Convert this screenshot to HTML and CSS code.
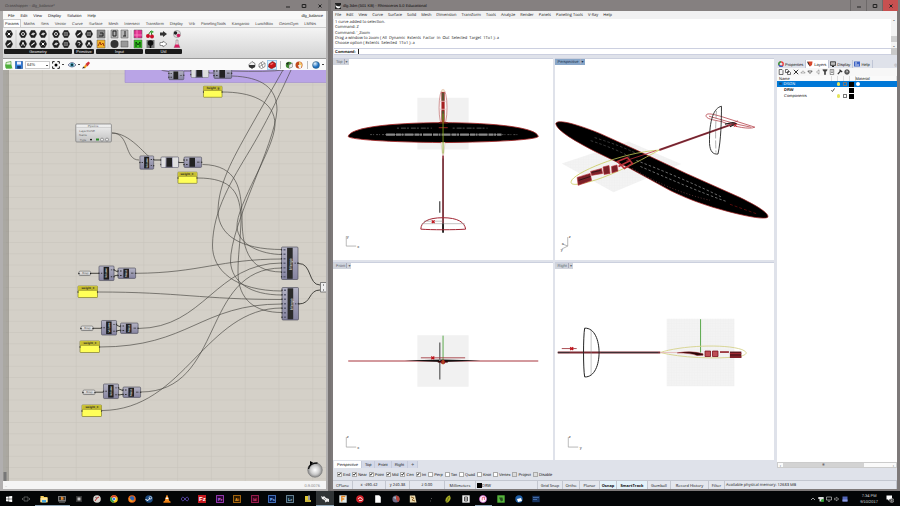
FILE: index.html
```html
<!DOCTYPE html>
<html lang="en">
<head>
<meta charset="utf-8">
<meta name="viewport" content="width=device-width, initial-scale=1">
<title>dlg.3dm - Rhinoceros 5.0 Educational</title>
<link rel="stylesheet" href="styles.css">
</head>
<body>
<svg class="defs" aria-hidden="true">
  <defs>
    <linearGradient id="metal" x1="0" y1="0" x2="0" y2="1"><stop offset="0" stop-color="#b4b3c4"/><stop offset="1" stop-color="#8583a0"/></linearGradient>
    <linearGradient id="pale" x1="0" y1="0" x2="0" y2="1"><stop offset="0" stop-color="#f2f2f2"/><stop offset="1" stop-color="#c2c2c2"/></linearGradient>
    <radialGradient id="dial"><stop offset="0" stop-color="#fff"/><stop offset=".6" stop-color="#ccc"/><stop offset="1" stop-color="#888"/></radialGradient>
    <radialGradient id="ballblue" cx=".35" cy=".3"><stop offset="0" stop-color="#e8f6ff"/><stop offset="1" stop-color="#1d6fc0"/></radialGradient>
    <pattern id="mesh" width="33.8" height="11.25" patternUnits="userSpaceOnUse" patternTransform="translate(75.7 118.3)"><path d="M0 0H33.8M0 0V11.25" fill="none" stroke="#c2beb5" stroke-width="1"/></pattern>
    <pattern id="fine" width="2.6" height="2.6" patternUnits="userSpaceOnUse"><rect width="2.6" height="2.6" fill="#f3f3f3"/><path d="M0 0H2.6M0 0V2.6" stroke="#ebebeb" stroke-width=".5"/></pattern>
    <symbol id="hex" viewBox="0 0 8 8"><path d="M2.2.3h3.6L7.8 4 5.8 7.7H2.2L.2 4z" fill="#1c1c1c" stroke="#555" stroke-width=".4"/></symbol>
    <symbol id="h1" viewBox="0 0 8 8"><use href="#hex"/><path d="M2.6 2.6l2.8 2.8M5.4 2.6L2.6 5.4" stroke="#fff"/></symbol>
    <symbol id="h2" viewBox="0 0 8 8"><use href="#hex"/><path d="M2.3 5.4L5.6 2.6" stroke="#fff" stroke-width="1.2"/></symbol>
    <symbol id="h3" viewBox="0 0 8 8"><use href="#hex"/><circle cx="4" cy="4" r="1.5" fill="none" stroke="#ddd"/></symbol>
    <symbol id="h4" viewBox="0 0 8 8"><use href="#hex"/><path d="M1.8 4.6l2.2-2 2.4.6-2 2.2z" fill="#ccc"/></symbol>
    <symbol id="h5" viewBox="0 0 8 8"><use href="#hex"/><path d="M2.2 2.4h3.4v3.2H2.2zM4 2.4v3.2M2.2 4h3.4" fill="none" stroke="#aaa" stroke-width=".6"/></symbol>
    <symbol id="h6" viewBox="0 0 8 8"><use href="#hex"/><path d="M2.6 5.8L4 2.2l1.4 3.6" fill="none" stroke="#fff" stroke-width=".9"/></symbol>
    <symbol id="h7" viewBox="0 0 8 8"><use href="#hex"/><path d="M2.6 3c.5-1 2.7-.8 2.5.4S4 4 4 5.4" fill="none" stroke="#fff" stroke-width=".9"/></symbol>
    <symbol id="axes" viewBox="0 0 13 12"><path d="M1 1v10h10" fill="none" stroke="#999" stroke-width=".7"/></symbol>
    <symbol id="panel" viewBox="-1 -1 22 14"><rect width="19.5" height="11.5" rx=".6" fill="#ffff58" stroke="#6c681f" stroke-width=".6"/><path d="M.3.3h18.9v4H.3z" fill="#c6bd31"/><path d="M0 4.4h19.5" stroke="#777223" stroke-width=".5"/><circle cx="0" cy="6" r=".7" fill="#333"/><circle cx="19.5" cy="6" r=".7" fill="#333"/></symbol>
    <symbol id="node" viewBox="-1 -1 18 18"><rect width="15.5" height="15" rx="1" fill="url(#metal)" stroke="#454552" stroke-width=".6"/><rect x="4.8" y="1" width="5.6" height="13" fill="#1d1d1d"/><g fill="#333"><circle cx="0" cy="7.5" r=".8"/><circle cx="15.5" cy="4" r=".8"/><circle cx="15.5" cy="11" r=".8"/><path d="M2 7h1.4v1H2zM12.2 3.5h1.4v1h-1.4zM12.2 10.5h1.4v1h-1.4z"/></g></symbol>
    <symbol id="small" viewBox="-1 -1 20 13"><rect width="17.6" height="10.4" rx="1" fill="url(#metal)" stroke="#454552" stroke-width=".6"/><rect x="5.4" y=".8" width="5.6" height="9" fill="#222"/><g fill="#333"><circle cx="0" cy="3" r=".8"/><circle cx="0" cy="7.6" r=".8"/><circle cx="17.6" cy="5.2" r=".8"/><path d="M2 2.5h1.6v1H2zM2 7.1h1.6v1H2zM13 4.8h2.5v.8H13z"/></g></symbol>
    <symbol id="merge" viewBox="-1 -1 19 35"><rect width="16.5" height="32.5" rx="1" fill="url(#metal)" stroke="#454552" stroke-width=".6"/><rect x="5.6" y=".8" width="5.6" height="31" fill="#2a2a2a"/><path d="M2 2.7h2M2 7.2h2M2 11.7h2M2 16.2h2M2 20.7h2M2 25.2h2M2 29.7h2M13 16.2h1.4" stroke="#5b5d75" stroke-width="1.4"/><path d="M0 2v30" stroke="#333" stroke-width="1.2" stroke-dasharray="1.4 3.1"/><circle cx="16.5" cy="16.2" r=".9" fill="#333"/></symbol>
    <symbol id="pill" viewBox="-1 -1 15 7"><rect width="12.5" height="4.6" rx="1.3" fill="url(#pale)" stroke="#555" stroke-width=".6"/><circle cx="0" cy="2.3" r=".7"/><circle cx="12.5" cy="2.3" r=".7"/></symbol>
  </defs>
</svg>

<div class="desktop">
  <main class="windows">
    <section class="window gh">
      <header class="titlebar">
        <h1>Grasshopper - dlg_balance*</h1>
        <div class="winbtns">
          <button aria-label="Minimize"><svg viewBox="0 0 6 6"><path d="M1 4h4"/></svg></button>
          <button aria-label="Maximize"><svg viewBox="0 0 6 6"><path d="M1.2 1.5h3.6v3H1.2z"/></svg></button>
          <button aria-label="Close"><svg viewBox="0 0 6 6"><path d="M1.5 1.5l3 3M4.500 1.500l-3 3"/></svg></button>
        </div>
      </header>
      <nav class="menu ghmenu"><a href="#">File</a><a href="#">Edit</a><a href="#">View</a><a href="#">Display</a><a href="#">Solution</a><a href="#">Help</a><span class="docname">dlg_balance</span></nav>
      <nav class="ribbontabs"><a href="#" class="on">Params</a><a href="#">Maths</a><a href="#">Sets</a><a href="#">Vector</a><a href="#">Curve</a><a href="#">Surface</a><a href="#">Mesh</a><a href="#">Intersect</a><a href="#">Transform</a><a href="#">Display</a><a href="#">Vrb</a><a href="#">PanelingTools</a><a href="#">Kangaroo</a><a href="#">LunchBox</a><a href="#">GeomGym</a><a href="#">LMNts</a></nav>
      <div class="ribbon">
        <div class="group">
          <svg width="68" height="20" viewBox="4 29 68 20">
            <g><use href="#h1" x="5" y="30" width="8" height="8"/><use href="#h2" x="5" y="40" width="8" height="8"/>
            <use href="#h3" x="19" y="30" width="8" height="8"/><use href="#h4" x="29" y="30" width="8" height="8"/><use href="#h4" x="39" y="30" width="8" height="8"/>
            <use href="#h6" x="19" y="40" width="8" height="8"/><use href="#h2" x="29" y="40" width="8" height="8"/><use href="#h1" x="39" y="40" width="8" height="8"/>
            <use href="#h3" x="52" y="30" width="8" height="8"/><use href="#h5" x="62" y="30" width="8" height="8"/><use href="#h4" x="52" y="40" width="8" height="8"/><use href="#h5" x="62" y="40" width="8" height="8"/></g>
            <path d="M16 30v18M49 30v18" stroke="#bbb" stroke-width=".6"/>
          </svg>
          <button class="grouplabel">Geometry</button>
        </div>
        <div class="group">
          <svg width="20" height="20" viewBox="0 0 20 20"><use href="#h2" x="1" y="1" width="8" height="8"/><use href="#h5" x="11" y="1" width="8" height="8"/><use href="#h7" x="1" y="11" width="8" height="8"/><use href="#h6" x="11" y="11" width="8" height="8"/></svg>
          <button class="grouplabel">Primitive</button>
        </div>
        <div class="group">
          <svg width="47" height="20" viewBox="96 29 47 20">
            <g stroke="#555" stroke-width=".5"><path d="M97 30h8v8h-8z" fill="#888"/><path d="M97 40h8v8h-8z" fill="#f5b428"/><path d="M111 30h7v8h-7zM121 30h7v8h-7z" fill="#b5b5b5"/><path d="M121 41h7v6h-7z" fill="#999"/><path d="M134 30h8v8h-8z" fill="#e0318f"/><path d="M134 40h8v8h-8z" fill="#35c41e"/></g>
            <circle cx="114.500" cy="44" r="4" fill="#333"/><path d="M99 36h4v-3h-3M113 31h3v5h-3zM123 36h3M125 31v5" fill="none" stroke="#222"/><path d="M98 46l2-4 1 3 2-2 1 3" fill="none" stroke="#a03c10"/><path d="M134 35h8M137 30v8" stroke="#ff8ac8" stroke-width=".8"/><path d="M136 47v-5l2 3 2-3v5" fill="none" stroke="#0b3a08"/><path d="M108 30v18M131 30v18" stroke="#bbb" stroke-width=".6"/>
          </svg>
          <button class="grouplabel">Input</button>
        </div>
        <div class="group">
          <svg width="37" height="20" viewBox="145 29 37 20">
            <path d="M151 31l-3 4M151 31l1 5" stroke="#2b8a22"/><circle cx="148" cy="36" r="2" fill="#c8102a"/><circle cx="152" cy="36.500" r="2" fill="#c8102a"/><path d="M151 30l3 2-2 1z" fill="#3a3"/>
            <path d="M160 32.500h3V31l4 3-4 3v-1.500h-3z" fill="#333"/><path d="M160 42.500h3V41l4 3-4 3v-1.500h-3z" fill="#fff" stroke="#555" stroke-width=".6"/>
            <rect x="146.500" y="40" width="8" height="8" fill="#777"/><circle cx="150.500" cy="43" r="2.800" fill="#111"/><path d="M150.500 43v5" stroke="#111" stroke-width="1.500"/>
            <circle cx="177" cy="34" r="3.600" fill="#ddd" stroke="#888" stroke-width=".6"/><circle cx="175.500" cy="33" r="1.700" fill="#222"/><circle cx="178.500" cy="35.500" r="1.800" fill="#d02060"/>
            <path d="M176 40v3l-2 4.500h6L178 43v-3z" fill="#f4d5e0" stroke="#777" stroke-width=".5"/><path d="M175.400 44.500h3.200l1.300 3h-5.800z" fill="#d81b60"/>
          </svg>
          <button class="grouplabel">Util</button>
        </div>
      </div>
      <div class="toolbar">
        <button aria-label="Open"><svg viewBox="0 0 8 8"><path d="M1 1.500l5-1V7H1z" fill="#e5f4da" stroke="#4e9a36" stroke-width=".7"/><path d="M0 3.500h6l1.500 4H1z" fill="#4fb03c"/></svg></button>
        <button aria-label="Save"><svg viewBox="0 0 8 8"><path d="M.4.4h7.200v7.200H.4z" fill="#2f7ad6" stroke="#174d94" stroke-width=".6"/><path d="M2 .6h4v3H2z" fill="#eef"/><path d="M2.200 5h3.600v2.600H2.200z" fill="#153c78"/></svg></button>
        <select aria-label="Zoom level"><option>64%</option></select>
        <button aria-label="Zoom extents"><svg viewBox="0 0 8 8"><path d="M.6 2.600v-2h2M5.400.6h2v2M7.400 5.400v2h-2M2.600 7.400h-2v-2" fill="none" stroke="#222"/><circle cx="4" cy="4" r="1.500"/></svg></button>
        <i class="caret"></i>
        <button class="eye" aria-label="Preview eye"><svg viewBox="0 0 8 8"><path d="M0 4q4-5 8 0-4 4-8 0" fill="#d5edf2" stroke="#336" stroke-width=".6"/><circle cx="4" cy="3.900" r="1.800" fill="#23809a"/><circle cx="4" cy="3.900" r=".8"/></svg></button>
        <i class="caret"></i>
        <button aria-label="Sketch"><svg viewBox="0 0 8 8"><path d="M1 6.500L4 3l1.500 1.500L3 7.500z" fill="#f2a126"/><path d="M3.500 3L6.500.5 8 2 5.500 5.500z" fill="#d2323a"/><path d="M0 7.500l1.500-2L3 7z" fill="#333"/></svg></button>
        <span class="fill"></span>
        <button aria-label="No preview"><svg viewBox="0 0 8 8"><path d="M1 3.500L4 .5l3 2v3L4 7.500l-3-2z" fill="#eee" stroke="#444" stroke-width=".6"/><path d="M1 4h6v2L4 7.500 1 6z" fill="#333"/></svg></button>
        <button aria-label="Wire preview"><svg viewBox="0 0 8 8"><path d="M1 3L5 .5l2 2v3L3.500 7.500 1 6zM1 6l6-4M3 1.500l2 5" fill="#fff" stroke="#555" stroke-width=".6"/></svg></button>
        <button class="picked" aria-label="Shaded preview"><svg viewBox="0 0 8 8"><path d="M1 3L4.500.4 7.700 2.500v3L3.500 7.800.5 6z" fill="#c8171b" stroke="#640b0d" stroke-width=".6"/><path d="M2 3l2.500-1 1 .8L3 4z" fill="#f77"/></svg></button>
        <i class="sep"></i>
        <button aria-label="Selected preview"><svg viewBox="0 0 8 8"><circle cx="4" cy="4" r="3.200" fill="#3f8a31"/><path d="M4 4L7.500 2v4L4 7.500z" fill="#eee" stroke="#555" stroke-width=".4"/><path d="M1 2.500L4 1l-1 3z" fill="#222"/></svg></button>
        <button aria-label="Document preview"><svg viewBox="0 0 8 8"><circle cx="4" cy="4" r="3.500" fill="#c04a1d"/><path d="M4 .8A3.300 3.300 0 0 1 6.500 6L4 5z" fill="#f3c96b"/><path d="M3 4h3v3H4z" fill="#eee"/></svg></button>
        <i class="sep"></i>
        <button aria-label="Mesh quality"><svg viewBox="0 0 8 8"><circle cx="4" cy="4" r="3.500" fill="url(#ballblue)" stroke="#245" stroke-width=".4"/></svg></button>
        <i class="caret"></i>
      </div>
      <svg class="canvas" viewBox="3 70 323 411" preserveAspectRatio="xMinYMin slice" role="img" aria-label="Definition graph">
        <rect x="3" y="70" width="1200" height="1200" fill="#d4d0c8"/>
        <rect x="3" y="70" width="1200" height="1200" fill="url(#mesh)" opacity=".75"/>
        <path d="M125 68h300v14.500H125z" fill="#b9a4e6" stroke="#a08ccc" stroke-width=".6"/>
        <rect x="3" y="70" width="6" height="1200" fill="#77756f" opacity=".45"/><rect x="3" y="70" width="3" height="1200" fill="#aaa8a2" opacity=".7"/>
        <path d="M3.500 472h3v9h-3z" fill="#777"/>
        <g fill="none" stroke="#45443f" stroke-width=".65">
          <path d="M160 69q2 2 9 2.500M184 71h7M209 73h5M232 71q35 1 52-1"/>
          <path d="M283 70L250 128C232 160 218 185 218 212 219 235 240 249.500 282 249.500"/>
          <path d="M291 70C275 105 262 130 250 150 232 180 213 210 212.500 245 212 270 235 291 282 291"/>
          <path d="M222 92C250 92 275 100 275 125 274 150 236 205 237 227 238 245 262 254.500 282 254.500"/>
          <path d="M232 76C262 77 277 88 277 110 275 145 230 225 230.500 262 232 282 250 295 282 295"/>
          <path d="M202.500 164.500C238 165 241 190 242 215 242 245 246 272 282 272"/>
          <path d="M197.500 178C232 178 241 192 241 222 240 245 238 255 238 272 238 300 255 312.500 282 312.500"/>
          <path d="M136 273.300C200 273 220 259 282 259M97.500 292C180 292 200 299.500 282 299.500M138 328.500C205 328 215 263 282 263M99.500 347C190 347 200 304 282 304M140.500 392C225 392 200 268 282 268M102 410.500C185 410 205 308 282 308"/>
          <path d="M112 133C130 133 124 160 139 160M112 133C130 133 145 155 150 157"/>
          <path d="M154 160h7M179 162.500h5M91 273.300h8M114 270l4 2M114 276l4-1M93.500 328.300h8M116 325l5 2M116 331l5-1M96 392.200h8M119 389l5 2M119 395l5-1" stroke-width="1"/>
          <path d="M298.500 263.500C312 263 308 285 320 285M298.500 304C312 304 308 290 320 290" stroke-width="1"/>
        </g>
        <use href="#small" x="168" y="68" width="17" height="15"/><use href="#small" x="190" y="66" width="20" height="13"/><rect x="191.500" y="67" width="4" height="10.400" fill="#ddd"/><rect x="203" y="67" width="5.500" height="10.400" fill="#ddd"/><use href="#small" x="213" y="67" width="20" height="13"/>
        <use href="#panel" x="202.500" y="85" width="21" height="14"/>
        <rect x="75.800" y="124" width="35.600" height="18" rx="1" fill="url(#pale)" stroke="#777" stroke-width=".7"/>
        <path d="M76 127.500h35" stroke="#bbb" stroke-width=".5"/><path d="M96 138.500h3v2h-3z" fill="#2e8b2b"/><circle cx="91" cy="139.600" r=".9"/><g fill="#eee" stroke="#555" stroke-width=".5"><circle cx="102" cy="139.600" r="1.500"/><circle cx="107" cy="139.600" r="1.500"/></g>
        <use href="#node" x="138" y="155" width="18" height="16"/><use href="#small" x="160" y="156" width="20" height="13"/><path d="M161.400 157.400h4v9.800h-4zM172.800 157.400h5.400v9.800h-5.400z" fill="#e0e0e0"/><use href="#small" x="183" y="156" width="20" height="13"/>
        <use href="#panel" x="177" y="171" width="21.500" height="14"/>
        <use href="#pill" x="78" y="270" width="14" height="7"/><use href="#node" x="98" y="265" width="17.500" height="17.500"/><use href="#small" x="117" y="267" width="20" height="13"/><use href="#panel" x="77" y="285" width="22" height="14"/>
        <use href="#pill" x="80" y="325" width="14.500" height="7"/><use href="#node" x="100.500" y="319.500" width="17.500" height="17.500"/><use href="#small" x="119.500" y="322" width="20" height="13"/><use href="#panel" x="79" y="340" width="22" height="14"/>
        <use href="#pill" x="82" y="389" width="14.500" height="7"/><use href="#node" x="102.500" y="383" width="17.500" height="17.500"/><use href="#small" x="122" y="386" width="20" height="13"/><use href="#panel" x="81" y="404" width="22" height="14"/>
        <use href="#merge" x="280.500" y="246" width="19" height="35"/><use href="#merge" x="281" y="286.500" width="19" height="35"/>
        <path d="M320.500 282.500H332v9.500h-11.500z" fill="#eee" stroke="#555" stroke-width=".7"/><path d="M323 285h1M323 290h1" stroke="#333"/>
        <g class="tag"><text x="213" y="89">height_g</text><text x="187" y="175">weight_F</text><text x="88" y="289">weight_F</text><text x="90" y="344">weight_F</text><text x="92" y="408">weight_F</text></g>
        <g class="pv"><text x="93" y="126.600">Pipeline</text><text x="83" y="131.500">Layer</text><text x="91" y="131.500">FUSE</text><text x="83" y="136">Name</text><text x="83" y="140.600">Type</text><text x="85.300" y="274.300">Brep</text><text x="87.300" y="329.300">Brep</text><text x="89.300" y="393.300">Brep</text></g>
        <g class="vert"><text class="big" transform="translate(292 264) rotate(-90)">Merge</text><text class="big" transform="translate(292.500 304) rotate(-90)">Merge</text><text transform="translate(107.400 273) rotate(-90)">Volume</text><text transform="translate(110 327.500) rotate(-90)">Volume</text><text transform="translate(112 391) rotate(-90)">Volume</text><text transform="translate(147.500 163) rotate(-90)">Volume</text><text transform="translate(127.200 273.400) rotate(-90)">Mass</text><text transform="translate(129.700 328.400) rotate(-90)">Mass</text><text transform="translate(132.200 392.400) rotate(-90)">Mass</text></g>
        <circle cx="315" cy="470" r="7.300" fill="url(#dial)" stroke="#777" stroke-width=".6"/><path d="M308.500 469q1-6 9-6" fill="none" stroke="#111" stroke-width="1.400"/><path d="M310 461l3 1.500-3 3z"/>
      </svg>
      <footer class="ghstatus"><span>..</span><span>0.9.0076</span></footer>
    </section>

    <section class="window rh">
      <header class="titlebar">
        <svg class="logo" viewBox="0 0 6 6"><path d="M0 0h6v6H0z" fill="#222"/><path d="M.5 1l1 2 3 .5L5.500 2v2.500L3 5.500.8 4z" fill="#fff"/></svg>
        <h2>dlg.3dm (501 KB) - Rhinoceros 5.0 Educational</h2>
        <div class="winbtns boxed">
          <button aria-label="Minimize"><svg viewBox="0 0 6 6"><path d="M1 4h4"/></svg></button>
          <button aria-label="Maximize"><svg viewBox="0 0 6 6"><path d="M1.200 1.500h3.600v3H1.200z"/></svg></button>
          <button class="red" aria-label="Close"><svg viewBox="0 0 6 6"><path d="M1.500 1.500l3 3M4.500 1.500l-3 3"/></svg></button>
        </div>
      </header>
      <nav class="menu rhmenu"><a href="#">File</a><a href="#">Edit</a><a href="#">View</a><a href="#">Curve</a><a href="#">Surface</a><a href="#">Solid</a><a href="#">Mesh</a><a href="#">Dimension</a><a href="#">Transform</a><a href="#">Tools</a><a href="#">Analyze</a><a href="#">Render</a><a href="#">Panels</a><a href="#">Paneling Tools</a><a href="#">V-Ray</a><a href="#">Help</a></nav>
      <div class="command">
        <div class="history"><p>1 curve added to selection.</p><p>Command: Z</p><p>Command: '_Zoom</p><p>Drag a window to zoom ( All&nbsp; Dynamic&nbsp; Extents&nbsp; Factor&nbsp; In&nbsp; Out&nbsp; Selected&nbsp; Target&nbsp; 1To1 ): a</p><p>Choose option ( Extents&nbsp; Selected&nbsp; 1To1 ): a</p></div>
        <div class="vscroll"><i>⌃</i><b></b><i>⌄</i></div>
        <div class="prompt"><label for="cmd">Command:</label><span class="cursor"></span><input id="cmd" type="text"></div>
        <div class="spin"></div>
      </div>
      <div class="work">
        <div class="views">
          <article class="view">
            <h3>Top <i>▾</i></h3>
            <svg viewBox="333 58 220 202">
              <path d="M417.500 97H469v52h-51.500z" fill="#f1f1f1"/>
              <ellipse cx="443.300" cy="107" rx="4" ry="18.500" fill="#fff" fill-opacity=".5" stroke="#c46a6a" stroke-width=".7"/>
              <path d="M441.700 91h3.200v31h-3.200z" fill="#a52020"/><path d="M442 92h2.400v8H442zM442 110h2.400v9H442z" fill="#5c5030"/><path d="M440 100.500h6.500M440 108.500h6.500" stroke="#e8c9c9" stroke-width=".8"/><ellipse cx="443.300" cy="90" rx="2" ry="1.500" fill="#f0e3cc"/>
              <path d="M348 136C349 127 390 122 443 122S538 127 539 136C536 139 500 141.500 443 142 388 141.500 351 139 348 136z" fill="#000" stroke="#a31c1c" stroke-width=".8"/>
              <path d="M370 134h148" stroke="#555" stroke-width=".9" stroke-dasharray="2 1 1 2"/><path d="M386 134h116" stroke="#888" stroke-width="2.200" stroke-dasharray="9 1 5 .6 2 1"/><path d="M397 127.500h35M453 127.500h35" stroke="#666" stroke-width=".8" stroke-dasharray="2 2 5 1"/><path d="M439 122h9M439 127h9" stroke="#7c1c1c" stroke-width="1.400"/>
              <path d="M441.300 142h4l-1.500 12.500h-1z" fill="#fff" stroke="#d2b9a0" stroke-width=".6"/><path d="M443.300 113v40" stroke="#7da018" stroke-width=".9"/>
              <path d="M443.300 155v76" stroke="#8b2a35" stroke-width="1.600"/><path d="M443.300 158v74" stroke="#44252a" stroke-width=".6"/><path d="M443.300 223v9.500" stroke="#222" stroke-width="1.800"/><path d="M440 201v11.500" stroke="#444" stroke-width="1.200"/>
              <path d="M421 229C421 222 428 217.500 443 217.500S465 222 466 229C455 229.800 431 229.800 421 229z" fill="none" stroke="#a02431" stroke-width="1"/><path d="M422 223.500h43M424 221h19" stroke="#888" stroke-width=".5"/><path d="M432 220.200l2.800 2.600M434.800 220.200l-2.800 2.600" stroke="#c01018" stroke-width="1.200"/>
              <use href="#axes" x="345" y="235" width="13" height="12"/><g class="axis"><text x="346.500" y="238">y</text><text x="357" y="248">x</text></g>
            </svg>
          </article>
          <article class="view">
            <h3 class="active">Perspective <i>▾</i></h3>
            <svg viewBox="555 58 219 202">
              <path d="M561 163l67-22 53 22.500L613 192z" fill="url(#fine)"/>
              <path d="M555 123C556 118 575 123 599.700 133L636 149.500 686 173 739.700 197C756 205 770 213 768 217 764 220 740 215 713 207 690 200 675 192.500 669.700 190L629.700 168 596 151.700C575 141 556 130 555 123z" fill="#000" stroke="#a31c1c" stroke-width=".7"/>
              <g fill="none" stroke="#999" stroke-width=".7" stroke-dasharray="2.500 2"><path d="M636 160C665 171 700 186 722 197M640 166C668 178 700 192 726 201" /><path d="M590 140q30 10 40 17M594 137q26 8 42 16" stroke="#555"/></g><path d="M632 168q36 22 78 32" fill="none" stroke="#8a4f4f" stroke-width=".7" stroke-dasharray="1 2"/><path d="M730 204l28 10" stroke="#8c1515" stroke-width=".6" stroke-dasharray="3 2"/>
              <path d="M570.500 181C572 173 620 152 659 149.500 640 160 600 182 575 184 571 184 570 183 570.500 181z" fill="none" stroke="#c9c957" stroke-width=".8"/>
              <g fill="#7c2028" stroke="#b83038" stroke-width=".6"><path d="M576.500 177l13-4 1.500 7-13.500 5zM590 171l11-3 1 5-11 2zM602.500 166.500l6-1.500 1 8-6 1zM611 166l5.500-1.500 1 6-6 2z"/><path d="M617 161l10-4 5 6-8 5zM618 166l12-6" fill="none" stroke-width="1.600"/><path d="M626 160l30-10" stroke-width=".8"/></g><path d="M578 180l12-4M591 172l9-2" stroke="#111" stroke-width=".7"/>
              <path d="M659 149.500L734 123" stroke="#9a3a42" stroke-width="2"/><path d="M660 149L734 123" stroke="#412" stroke-width=".6"/>
              <path d="M706 115C706 112 712 113 722 116L755 126.500C750 129 735 126.500 722 121 712 119 706 118 706 115zM709 115.500l28 8 14 3M728 125l10-5" fill="none" stroke="#b5424a" stroke-width=".8"/><path d="M725 123.500l8-1.500 3 1-6 3" fill="none" stroke="#222" stroke-width="1.200"/><path d="M734 123l3 3M737 123l-3 3" stroke="#c01018"/>
              <path d="M721.500 105.500C714 107 709 119 709.500 143 710 151 713 154 718 153.500 721 140 721.500 120 721.500 105.500z" fill="none" stroke="#222" stroke-width=".9"/><path d="M716.500 110q-1.500 20-.5 42" fill="none" stroke="#666" stroke-width=".5" stroke-dasharray="8 2"/>
              <path d="M567 246v-9M567 246l-6 3M567 246l-5-2" fill="none" stroke="#999" stroke-width=".7"/><g class="axis"><text x="568" y="238">z</text><text x="560" y="251">y</text><text x="561" y="245">x</text></g>
            </svg>
          </article>
          <article class="view">
            <h3>Front <i>▾</i></h3>
            <svg viewBox="333 262 220 198">
              <path d="M417.500 334.500H469v52h-51.500z" fill="#f1f1f1"/><path d="M443.300 335v26" stroke="#5aa84c" stroke-width="1"/>
              <path d="M348 360.500h191" stroke="#a6333a" stroke-width="1"/><path d="M405 360l38-1 38 1-38 1.500z" fill="#111"/><path d="M440 342v37" stroke="#777" stroke-width="1.500"/><path d="M421 357.300h44.500" stroke="#a23a40" stroke-width=".9"/><path d="M431.500 356l3 2.800M434.500 356l-3 2.800" stroke="#c01018" stroke-width="1.200"/><path d="M438 361.300h10" stroke="#300" stroke-width="1.600"/><circle cx="443.300" cy="361.600" r="2.200" fill="#9e1c22"/><path d="M443.300 359v5" stroke="#c79224" stroke-width=".7"/>
              <use href="#axes" x="345" y="436" width="13" height="12"/><g class="axis"><text x="346.500" y="438">z</text><text x="357" y="449">x</text></g>
            </svg>
          </article>
          <article class="view">
            <h3>Right <i>▾</i></h3>
            <svg viewBox="555 262 219 198">
              <path d="M666.500 318h68v68h-68z" fill="url(#fine)"/><path d="M700.500 318.500V352" stroke="#5aa84c"/>
              <path d="M660 352C680 345 725 343 742 349 749 352 747 354 740 356 715 359 680 357 660 352z" fill="none" stroke="#d6d28c" stroke-width=".9"/>
              <path d="M557 352h103" stroke="#7a2a32" stroke-width="2"/><path d="M557 352h12M600 352h58" stroke="#3c3034" stroke-width="1"/><path d="M660 352h17" stroke="#e3b5b5" stroke-width=".8"/>
              <path d="M677 352.300q15-2.500 26 1v1.400l-6 .3q-6-2.500-20-2.700z" fill="#260607" stroke="#a02028" stroke-width=".5"/>
              <path d="M705 350.500h5.500v5.500H705zM712.500 350.500h5.500v5.500h-5.500z" fill="#bd4f55" stroke="#7c1018" stroke-width=".8"/><path d="M720 351.500h9" stroke="#8f1c24" stroke-width="1.600"/><path d="M730 351h11.500v6.500H730z" fill="#611820"/><path d="M730 353h11.500M730 356.500h11.500" stroke="#b2333b" stroke-width=".8"/>
              <path d="M584 327.500C594 327 598.500 340 598.500 352S594 377 584 376.500C582.500 368 582.500 336 584 327.500z" fill="none" stroke="#222" stroke-width="1"/><path d="M590.500 329v46" stroke="#888" stroke-width=".5"/>
              <path d="M561 348h15" stroke="#a23a40" stroke-width=".9"/><path d="M569.500 346.600l3 2.800M572.500 346.600l-3 2.800" stroke="#c01018" stroke-width="1.300"/>
              <use href="#axes" x="566.500" y="436" width="13" height="12"/><g class="axis"><text x="568" y="438">z</text><text x="579" y="449">y</text></g>
            </svg>
          </article>
        </div>
        <nav class="viewtabs"><a href="#" class="on">Perspective</a><a href="#">Top</a><a href="#">Front</a><a href="#">Right</a><a href="#">✧</a></nav>
        <form class="snaps"><label><input type="checkbox" checked>End</label><label><input type="checkbox" checked>Near</label><label><input type="checkbox" checked>Point</label><label><input type="checkbox" checked>Mid</label><label><input type="checkbox" checked>Cen</label><label><input type="checkbox" checked>Int</label><label><input type="checkbox">Perp</label><label><input type="checkbox">Tan</label><label><input type="checkbox">Quad</label><label><input type="checkbox">Knot</label><label><input type="checkbox">Vertex</label><label class="dim"><input type="checkbox">Project</label><label class="dim"><input type="checkbox">Disable</label></form>
        <aside class="side">
          <nav class="sidetabs">
            <a href="#"><svg viewBox="0 0 6 6"><circle cx="3" cy="3" r="2.200" fill="none" stroke="#e33" stroke-width="1.300"/><path d="M3 .8A2.200 2.200 0 0 0 1 4" fill="none" stroke="#2a4" stroke-width="1.300"/><path d="M1 4a2.200 2.200 0 0 0 3.500 1" fill="none" stroke="#26c" stroke-width="1.300"/></svg>Properties</a>
            <a href="#" class="on"><svg viewBox="0 0 6 6"><path d="M0 .5l3 1v4L1 3z" fill="#222"/><path d="M1 .5h4.500L5 4 3 5.500z" fill="#d8472b"/></svg>Layers</a>
            <a href="#"><svg viewBox="0 0 6 6"><path d="M.4.8h5.200v3.600H.4z" fill="#bbb" stroke="#222" stroke-width=".8"/><path d="M2 5.500h2" stroke="#222"/></svg>Display</a>
            <a href="#"><svg viewBox="0 0 6 6"><path d="M0 .5h6v5H0z" fill="#3b62c4"/><path d="M1 2h2M1 4h4" stroke="#fff" stroke-width=".8"/></svg>Help</a>
            <button class="gear" aria-label="Panel options">◎</button>
          </nav>
          <div class="sidetools">
            <button aria-label="New layer"><svg viewBox="0 0 6 6"><path d="M1.200.5H4l1 1v4H1.200z"/></svg></button>
            <button aria-label="New sublayer"><svg viewBox="0 0 6 6"><path d="M.5.5h2l1 1v2h-3zM2.500 2.500h2l1 1v2h-3z"/></svg></button>
            <button aria-label="Delete"><svg viewBox="0 0 6 6"><path d="M.8.8l4.400 4.400M5.200.8L.8 5.200" stroke-width="1"/></svg></button>
            <button aria-label="Move up"><svg viewBox="0 0 6 6"><path d="M.8 4L3 1.800 5.200 4z" opacity=".5"/></svg></button>
            <button aria-label="Move down"><svg viewBox="0 0 6 6"><path d="M.8 2h4.400L3 4.500z"/></svg></button>
            <button aria-label="Move out"><svg viewBox="0 0 6 6"><path d="M4 .8v4.400L1.500 3z" opacity=".5"/></svg></button>
            <button aria-label="Filter"><svg viewBox="0 0 6 6"><path d="M.8.8h4.400L3.400 3v2.500h-.8V3z" fill="#444"/></svg></button>
            <button aria-label="Sheet"><svg viewBox="0 0 6 6"><path d="M1.200.5h3.500v5H1.200zM2 2h2M2 3.500h2" opacity=".7"/></svg></button>
            <button aria-label="Tools"><svg viewBox="0 0 6 6"><path d="M.8 5.200L4 1.500M2.500.8L5.200 3" stroke-width="1.200"/></svg></button>
            <button aria-label="Help"><svg viewBox="0 0 6 6"><circle cx="3" cy="3" r="2.300" fill="#666"/><path d="M2.200 2.200q1.500-.8 1.200.6L3 3.500" stroke="#fff"/></svg></button>
          </div>
          <div class="list">
            <table>
              <thead><tr><th class="nm">Name</th><th></th><th></th><th></th><th></th><th class="mat">Material</th></tr></thead>
              <tbody>
                <tr class="sel"><td class="nm"><span class="plus">⊞</span> DSGN</td><td></td><td><i class="bulb"></i></td><td><i class="lock"></i></td><td><i class="sw"></i></td><td><i class="dot"></i></td></tr>
                <tr><td class="nm in"><b>DRW</b></td><td><svg class="tick" viewBox="0 0 5 5"><path d="M.5 3l1.300 1.300L4.500.6"/></svg></td><td></td><td></td><td><i class="sw"></i></td><td></td></tr>
                <tr><td class="nm in">Components</td><td></td><td><i class="bulb"></i></td><td><i class="lock"></i></td><td><i class="sw"></i></td><td></td></tr>
              </tbody>
            </table>
          </div>
          <div class="hscroll"><i>‹</i><b>≡</b><i>›</i></div>
        </aside>
      </div>
      <footer class="rhstatus">
        <button>CPlane</button><span>x -490.42</span><span>y 240.38</span><span>z 0.00</span><button>Millimeters</button><button class="lay"><i class="sw"></i>DRW</button><button>Grid Snap</button><button>Ortho</button><button>Planar</button><button class="on">Osnap</button><button class="on">SmartTrack</button><button>Gumball</button><button>Record History</button><button>Filter</button><span class="mem">Available physical memory: 12683 MB</span>
      </footer>
    </section>
  </main>

  <footer class="taskbar">
    <div class="apps">
      <button aria-label="Start"><svg viewBox="0 0 8 8"><path d="M1 1.800l2.700-.4v2.400H1zM4.100 1.300L7.200.9v2.900H4.100zM1 4.200h2.700v2.400L1 6.200zM4.100 4.200h3.100v2.900l-3.100-.4z" fill="#fff"/></svg></button>
      <button aria-label="Task view"><svg viewBox="0 0 8 8"><path d="M2 2h4v4H2zM.5 3v2M7.500 3v2" fill="none" stroke="#777" stroke-width=".7"/></svg></button>
      <button class="run" aria-label="Explorer"><svg viewBox="0 0 8 8"><path d="M.5 1h3l.6 1h3.400v5.500h-7z" fill="#f7cf5f"/><path d="M.5 3h7v4h-7z" fill="#fbe49c"/><path d="M2 5h4v2.500H2z" fill="#46a5dc"/></svg></button>
      <button class="run" aria-label="Viewer"><svg viewBox="0 0 8 8"><path d="M0 1h8v5.500H0z" fill="#777"/><path d="M1 2h6v3H1z" fill="#333"/><path d="M3 1.500l2.500 1v2L3 5z" fill="#e2852a"/><path d="M1 7.200h6" stroke="#aaa" stroke-width=".6"/></svg></button>
      <button aria-label="Console"><svg viewBox="0 0 8 8"><path d="M1 1h6v6H1z" fill="#333"/><path d="M2.500 2.500h3v3h-3z" fill="#bbb"/></svg></button>
      <button aria-label="Paint"><svg viewBox="0 0 8 8"><circle cx="4" cy="4" r="3.800" fill="#d8d4cf"/><path d="M2 6l2-3 2-1" stroke="#b33" fill="none"/><circle cx="3" cy="2.500" r=".8" fill="#777"/></svg></button>
      <button aria-label="Chrome"><svg viewBox="0 0 8 8"><circle cx="4" cy="4" r="3.800" fill="#f4c51c"/><path d="M4 4L.7 2.100A3.800 3.800 0 0 1 7.400 2.200H4z" fill="#dd4130"/><path d="M4 4L.7 2.100A3.800 3.800 0 0 0 3.800 7.800z" fill="#2c9c4c"/><circle cx="4" cy="4" r="1.800" fill="#fff"/><circle cx="4" cy="4" r="1.300" fill="#3b7ded"/></svg></button>
      <button aria-label="Firefox"><svg viewBox="0 0 8 8"><circle cx="4" cy="4" r="3.800" fill="#e9661b"/><circle cx="4" cy="3.500" r="2.200" fill="#2b67b8"/><path d="M.5 3q2 0 2.500 1.500T6 5.500Q4 8 1.500 6z" fill="#f79a22"/></svg></button>
      <button aria-label="Steam"><svg viewBox="0 0 8 8"><circle cx="4" cy="4" r="3.800" fill="#1b4a80"/><path d="M.5 4.500L3 5.500 5.200 3" stroke="#fff" fill="none"/><circle cx="5.400" cy="2.800" r="1.300" fill="none" stroke="#fff" stroke-width=".6"/></svg></button>
      <button aria-label="VLC"><svg viewBox="0 0 8 8"><path d="M3.400.3h1.200L6.300 6H1.700z" fill="#f28a1e"/><path d="M2.900 2.500h2.200l.4 1.500h-3z" fill="#fff"/><path d="M.8 6h6.400l.5 1.700H.3z" fill="#e97d12"/></svg></button>
      <button aria-label="Visual Studio"><svg viewBox="0 0 8 8"><path d="M4 4C2.500 1.500.5 2 .5 4s2 2.500 3.500 0 3.500-2 3.500 0-2 2.500-3.500 0z" fill="none" stroke="#6a54c4" stroke-width=".9"/></svg></button>
      <button aria-label="FileZilla"><svg viewBox="0 0 8 8"><path d="M0 0h8v8H0z" fill="#c51a20"/><text class="fz" x="1" y="6.200" fill="#fff">Fz</text></svg></button>
      <button aria-label="Premiere"><svg viewBox="0 0 8 8"><path d="M.4.4h7.200v7.200H.4z" fill="#2a0634" stroke="#c24bdf" stroke-width=".8"/><text x="2" y="5.600" fill="#d774ef">Pr</text></svg></button>
      <button aria-label="Illustrator"><svg viewBox="0 0 8 8"><path d="M.4.4h7.200v7.200H.4z" fill="#2d1a00" stroke="#d98714" stroke-width=".8"/><text x="2" y="5.600" fill="#f29a1c">Ai</text></svg></button>
      <button aria-label="InDesign"><svg viewBox="0 0 8 8"><path d="M.4.4h7.200v7.200H.4z" fill="#330317" stroke="#c42a67" stroke-width=".8"/><text x="2" y="5.600" fill="#ea3b7c">Id</text></svg></button>
      <button aria-label="Photoshop"><svg viewBox="0 0 8 8"><path d="M.4.4h7.200v7.200H.4z" fill="#061a4a" stroke="#5b92e8" stroke-width=".8"/><text x="2" y="5.600" fill="#8ebcff">Ps</text></svg></button>
      <button aria-label="Lightroom"><svg viewBox="0 0 8 8"><path d="M.4.4h7.200v7.200H.4z" fill="#10212e" stroke="#8ba9bc" stroke-width=".8"/><text x="2" y="5.600" fill="#aecbdd">Lr</text></svg></button>
      <button aria-label="Scanner"><svg viewBox="0 0 8 8"><path d="M1 1h4v4H1z" fill="#e0c832"/><path d="M4 .5h2v6H4z" fill="#999"/><path d="M1 5h6v2H1z" fill="#c7b33a"/></svg></button>
      <button class="run focus" aria-label="Rhinoceros"><svg viewBox="0 0 8 8"><path d="M0 1l2 1 1-1 2 2 3 1v3L6 6.500 4.500 7.500 3.500 5 1 4z" fill="#eee"/><path d="M3 3l2 2" stroke="#666" stroke-width=".6"/></svg></button>
      <button aria-label="Fusion"><svg viewBox="0 0 8 8"><path d="M.3.3h7.400v7.400H.3z" fill="#dfe9ea"/><path d="M2.800 6.500v-5h3.500M2.800 4h2.500" stroke="#e98722" stroke-width="1.300" fill="none"/></svg></button>
      <button aria-label="Red app"><svg viewBox="0 0 8 8"><circle cx="4" cy="4" r="3.800" fill="#d22028"/><path d="M2 4q2-3 4-.5T3 5.500" fill="none" stroke="#fff" stroke-width=".8"/></svg></button>
      <button aria-label="Document"><svg viewBox="0 0 8 8"><path d="M1.200.3h4l1.600 1.600v5.800H1.200z" fill="#fff"/></svg></button>
      <button aria-label="Sphere"><svg viewBox="0 0 8 8"><circle cx="4" cy="4" r="3.600" fill="#6f6a86"/><path d="M4 .4a3.600 3.600 0 0 1 2 6.500L4 4z" fill="#b8453a"/><path d="M1 2.500l3-1v3z" fill="#9ab"/></svg></button>
      <button aria-label="Notes"><svg viewBox="0 0 8 8"><path d="M.8.5H6l1.500 7H.8z" fill="#ead9ae"/><path d="M2 2l3 1-2 2 3 1" stroke="#966d31" fill="none"/></svg></button>
      <button aria-label="Cursor"><svg viewBox="0 0 8 8"><path d="M4 4l1-1M3 6h1" stroke="#888" stroke-width=".6"/></svg></button>
      <button aria-label="Leaf"><svg viewBox="0 0 8 8"><path d="M2 7.500Q0 3 5.500 .3 8.500 4 4 7.500z" fill="#a7ac25"/><path d="M2.500 7L5 2" stroke="#4c5410" stroke-width=".7"/></svg></button>
      <button aria-label="Epic"><svg viewBox="0 0 8 8"><path d="M.3.3h7.400v7.400H.3z" fill="#eee"/><path d="M2.500 2h3v4h-3zM2.500 4h3" fill="none" stroke="#333" stroke-width=".8"/></svg></button>
      <button class="run" aria-label="iTunes"><svg viewBox="0 0 8 8"><circle cx="4" cy="4" r="3.500" fill="#fff" stroke="#d65bd2" stroke-width=".7"/><path d="M3.200 5.500v-3l2.200-.5v3" fill="none" stroke="#e83a6c" stroke-width=".8"/></svg></button>
      <button aria-label="Evernote"><svg viewBox="0 0 8 8"><path d="M.3.3h7.400v7.400H.3z" fill="#55b43c"/><path d="M2 2.500h3.500l.5 3-2 1z" fill="#274b22"/></svg></button>
      <button aria-label="Thunderbird"><svg viewBox="0 0 8 8"><circle cx="4" cy="4" r="3.700" fill="#2060a8"/><path d="M2 4l4-1 1 3-4 1z" fill="#fff"/></svg></button>
      <button aria-label="Terminal"><svg viewBox="0 0 8 8"><path d="M.3.8h7.400v6.400H.3z" fill="#16325e"/><path d="M1 2.500h6M1 4.500h4" stroke="#4d77b5" stroke-width=".8"/></svg></button>
    </div>
    <div class="tray">
      <svg viewBox="0 0 6 6"><path d="M1 4l2-2 2 2" fill="none" stroke="#ddd" stroke-width=".7"/></svg>
      <svg viewBox="0 0 6 6"><path d="M.3 1h5.400v2H.3zM1.500 3h4v2.500h-4z" fill="#ddd"/><circle cx="4.500" cy="4.500" r="1.500" fill="#2aa52a"/></svg>
      <svg viewBox="0 0 6 6"><path d="M.5 1h5v3h-5zM2 5.300h2" fill="none" stroke="#ddd" stroke-width=".6"/></svg>
      <svg viewBox="0 0 6 6"><path d="M.5 2.200h1L3 1v4L1.500 3.800h-1zM4 2q1 1 0 2" fill="none" stroke="#bbb" stroke-width=".6"/></svg>
      <svg viewBox="0 0 6 6"><path d="M.5.5h5v5h-5z" fill="#5366b8"/><path d="M.5 3.500h5v2h-5z" fill="#8b99dd"/></svg>
      <time><span>7:34 PM</span><span>9/10/2017</span></time>
      <svg class="note" viewBox="0 0 8 8"><path d="M.5.5h5.500v4H3L2 6V4.500H.5z" fill="#fff"/><circle cx="5.800" cy="5.500" r="2.100" fill="#333" stroke="#ccc" stroke-width=".5"/><path d="M5.800 4.300v2.400" stroke="#fff" stroke-width=".6"/></svg>
    </div>
  </footer>
</div>
</body>
</html>
```
FILE: styles.css
```css
* { box-sizing: border-box; }
body { margin: 0; font: 4px/5px "Liberation Sans", Arial, sans-serif; color: #111; text-rendering: geometricPrecision; }
a { color: inherit; text-decoration: none; }
button, input, select { font: inherit; color: inherit; margin: 0; padding: 0; border: 0; background: none; border-radius: 0; }
h1, h2, h3, p { margin: 0; font: inherit; }
i { font-style: normal; }
.defs { position: absolute; width: 0; height: 0; }

.desktop { min-height: 100vh; display: grid; grid-template-rows: 1fr 15px; background: #000; overflow: hidden; }
.windows { display: grid; grid-template-columns: 331fr 569fr; min-height: 0; }
.window { display: flex; flex-direction: column; min-width: 0; min-height: 0; }
.gh { background: #b1afaf; border-right: 3px solid #787474; padding: 0 2px 2px 3px; }
.rh { background: #dfe2ea; border: solid #7d7979; border-width: 0 3px 2px 2px; }

.titlebar { height: 11px; flex: none; display: flex; align-items: center; gap: 2px; background: #858080; color: #0c0a0a; }
.gh .titlebar { margin: 0 -2px 0 -3px; padding-left: 5px; color: #444040; }
.rh .titlebar { margin: 0 -1px 0 -2px; padding-left: 4px; }
.logo { width: 6px; height: 6px; }
.winbtns { margin-left: auto; display: flex; height: 11px; }
.winbtns button { width: 16px; display: grid; place-items: center; }
.winbtns svg { width: 6px; height: 6px; fill: none; stroke: #222; stroke-width: 1; }
.boxed button { border-left: 1px solid #6d6969; }
.boxed .red { background: #c75050; }

.menu { height: 8px; flex: none; display: flex; align-items: center; background: #f8f8f8; }
.ghmenu { padding: 0 3px 0 5px; gap: 6px; }
.docname { margin-left: auto; }
.rhmenu, .history, .rhstatus { font-family: "Open Sans", "Liberation Sans", sans-serif; }
.rhmenu { padding-left: 2px; gap: 5px; background: #f1f1f2; }
.ribbontabs { height: 9px; flex: none; display: flex; align-items: stretch; background: #f4f4f4; color: #444; border-bottom: 1px solid #ccc; }
.ribbontabs a { padding: 2px 3px 0; }
.ribbontabs .on { background: #fff; border: 1px solid #ccc; border-width: 1px 1px 0; padding: 1px 1px 0; color: #222; }
.ribbon { height: 31px; flex: none; display: flex; gap: 2px; padding: 1px 1px 4px; background: linear-gradient(#f4f4f4, #d3d3d3); border-bottom: 1px solid #9a9a9a; }
.group { display: flex; flex-direction: column; }
.group svg { display: block; }
.grouplabel { height: 5px; background: #1b1b1b; color: #eee; line-height: 5px; border-radius: 1px; }
.toolbar { height: 11px; flex: none; display: flex; align-items: center; gap: 2px; padding: 0 2px; background: #fafafa; }
.toolbar button { width: 8px; height: 8px; flex: none; }
.toolbar .eye { margin-left: 2px; }
.toolbar svg { display: block; width: 8px; height: 8px; }
.toolbar select { width: 25px; height: 8px; border: 1px solid #ccc; padding: 0 1px; appearance: none; background: #fff linear-gradient(#555, #555) no-repeat 20px 3px / 2px 1px; }
.toolbar .picked { outline: 1px solid #9cc9ea; background: #dceefa; }
.caret { width: 2px; height: 1px; background: #444; }
.sep { width: 1px; height: 8px; background: #bbb; margin: 0 2px; }
.fill { flex: 1; }
.canvas { flex: 1 1 0; min-height: 0; width: 100%; display: block; }
.canvas text { text-anchor: middle; font-size: 3px; }
.canvas .big { font-size: 4px; }
.tag { fill: #222; font-weight: bold; }
.pv { fill: #666; }
.vert { fill: #eee; }
.ghstatus { height: 8px; flex: none; display: flex; justify-content: space-between; align-items: center; padding: 0 6px 0 2px; background: #f5f5f5; color: #888; }

.command { flex: none; display: grid; grid-template-columns: 1fr 6px; grid-template-rows: 29px 7px; background: #fff; margin-left: 1px; }
.history { display: flex; flex-direction: column; justify-content: space-between; padding: 1px 0 2px 1px; }
.history p { white-space: nowrap; }
.vscroll { display: flex; flex-direction: column; justify-content: space-between; align-items: center; background: #f3f3f3; }
.vscroll b { width: 6px; height: 6px; margin-top: 10px; background: #cfcfcf; }
.prompt { display: flex; align-items: center; border: solid #ccd0e0; border-width: 1px 0; padding-left: 1px; }
.prompt label { font-weight: bold; }
.prompt input { flex: 1; height: 5px; outline: 0; }
.cursor { width: 1px; height: 5px; background: #222; margin-left: 2px; }
.spin { background: #c9c9c9; }

.work { flex: 1 1 0; min-height: 0; display: grid; grid-template-columns: 1fr 120px; grid-template-rows: 1fr 8px 12px; column-gap: 3px; padding: 3px 0 0; }
.views { display: grid; grid-template-columns: 1fr 1fr; grid-template-rows: 202fr 198fr; gap: 2px; min-height: 0; }
.view { position: relative; background: #fff; border-top: 1px solid #cbd0de; min-width: 0; min-height: 0; }
.view > svg { position: absolute; inset: 0; width: 100%; height: 100%; }
.view h3 { position: absolute; z-index: 1; left: 0; top: 0; height: 6px; line-height: 6px; padding: 0 1px 0 3px; background: #d0d4dc; color: #5d6670; white-space: nowrap; }
.view h3 i { border-left: 1px solid #aab; padding-left: 1px; }
.view .active { background: #88a6c8; color: #17304c; }
.axis text { font-size: 4px; fill: #333; }
.viewtabs { grid-column: 1; display: flex; align-items: center; padding-left: 1px; }
.viewtabs a { height: 7px; line-height: 7px; padding: 0 3px; border-right: 1px solid #c4cada; background: #d4d9e8; }
.viewtabs .on { background: #fff; }
.snaps { grid-column: 1; display: flex; align-items: center; gap: 2px; padding-left: 4px; white-space: nowrap; }
.snaps label { display: flex; align-items: center; gap: 1px; }
.snaps input { appearance: none; display: grid; place-items: center; width: 5px; height: 5px; border: 1px solid #aaa; background: #fff; }
.snaps input:checked::before { content: ""; width: 3px; height: 3px; background: #111; clip-path: polygon(0 50%, 35% 70%, 85% 0, 100% 20%, 40% 100%, 0 80%); }
.snaps .dim input { background: #ddd; }

.side { grid-column: 2; grid-row: 1 / 3; display: flex; flex-direction: column; min-height: 0; }
.sidetabs { height: 10px; flex: none; display: flex; align-items: flex-end; }
.sidetabs a { height: 8px; display: flex; align-items: center; gap: 1px; padding: 0 2px 0 1px; border-right: 1px solid #c0c6d6; }
.sidetabs svg { width: 6px; height: 6px; }
.sidetabs .on { background: #fff; }
.gear { margin-left: auto; color: #888; height: 6px; line-height: 6px; }
.sidetools { height: 8px; flex: none; display: flex; align-items: center; justify-content: space-between; padding: 0 47px 0 1px; background: #f7f7f7; }
.sidetools button { width: 6px; height: 6px; }
.sidetools svg { display: block; width: 6px; height: 6px; fill: none; stroke: #333; stroke-width: .7px; }
.list { flex: 1; min-height: 0; background: #fff; }
.list table { width: 100%; border-collapse: collapse; table-layout: fixed; }
.list th { height: 5px; font-weight: normal; text-align: left; padding: 0; border-right: 1px solid #ddd; background: #fafafa; }
.list th:not(.nm):not(.mat) { width: 6px; }
.list .nm { width: 54px; padding-left: 2px; }
.list .mat { width: auto; }
.list td { height: 6px; padding: 0; line-height: 6px; }
.list .in { padding-left: 7px; }
.sel { background: #0078d7; color: #fff; }
.plus { color: #234; }
.tick { display: block; width: 4px; height: 4px; fill: none; stroke: #111; stroke-width: 1; }
.list td i { display: block; }
.bulb { width: 3px; height: 4px; border-radius: 2px; background: #e6e45a; }
.lock { width: 4px; height: 4px; border: 1px solid #777; }
.sw { width: 5px; height: 5px; background: #000; }
.dot { width: 4px; height: 4px; border-radius: 50%; background: #fff; margin-left: 1px; }
.hscroll { height: 6px; flex: none; display: flex; align-items: center; border: 1px solid #ccc; background: #fafafa; }
.hscroll i { width: 5px; text-align: center; }
.hscroll b { width: 81px; height: 4px; line-height: 4px; text-align: center; background: #d3d3d3; font-weight: normal; }
.hscroll i:last-child { margin-left: auto; }

.rhstatus { height: 9px; flex: none; display: grid; grid-template-columns: 20fr 33fr 24fr 35fr 31fr 62fr 25fr 17fr 20fr 17fr 31fr 23fr 38fr 16fr 172fr; align-items: stretch; border-top: 1px solid #c3c7d0; background: #e4e7ee; }
.rhstatus > * { border-right: 1px solid #c3c7d0; display: flex; align-items: center; justify-content: center; white-space: nowrap; min-width: 0; }
.rhstatus .lay, .rhstatus .mem { justify-content: flex-start; padding-left: 1px; }
.rhstatus .on { font-weight: bold; background: #e4f2fa; }

.taskbar { display: grid; grid-template-columns: 545fr 355fr; background: #030506; color: #ddd; }
.apps { display: flex; min-width: 0; }
.apps button { flex: 1 1 0; display: grid; place-items: center; border-bottom: 1px solid transparent; padding-top: 1px; }
.apps svg { width: 8px; height: 8px; display: block; }
.apps text { font-size: 4px; font-weight: bold; }
.apps .fz { font-size: 6px; }
.apps .run { border-bottom-color: #8fa5b5; }
.apps .focus { background: #303436; }
.tray { display: flex; justify-content: flex-end; align-items: center; gap: 2px; padding-right: 6px; }
.tray svg { width: 6px; height: 6px; }
.tray time { display: flex; flex-direction: column; align-items: center; line-height: 6px; margin: 0 6px 0 10px; }
.tray .note { width: 8px; height: 8px; }
```
